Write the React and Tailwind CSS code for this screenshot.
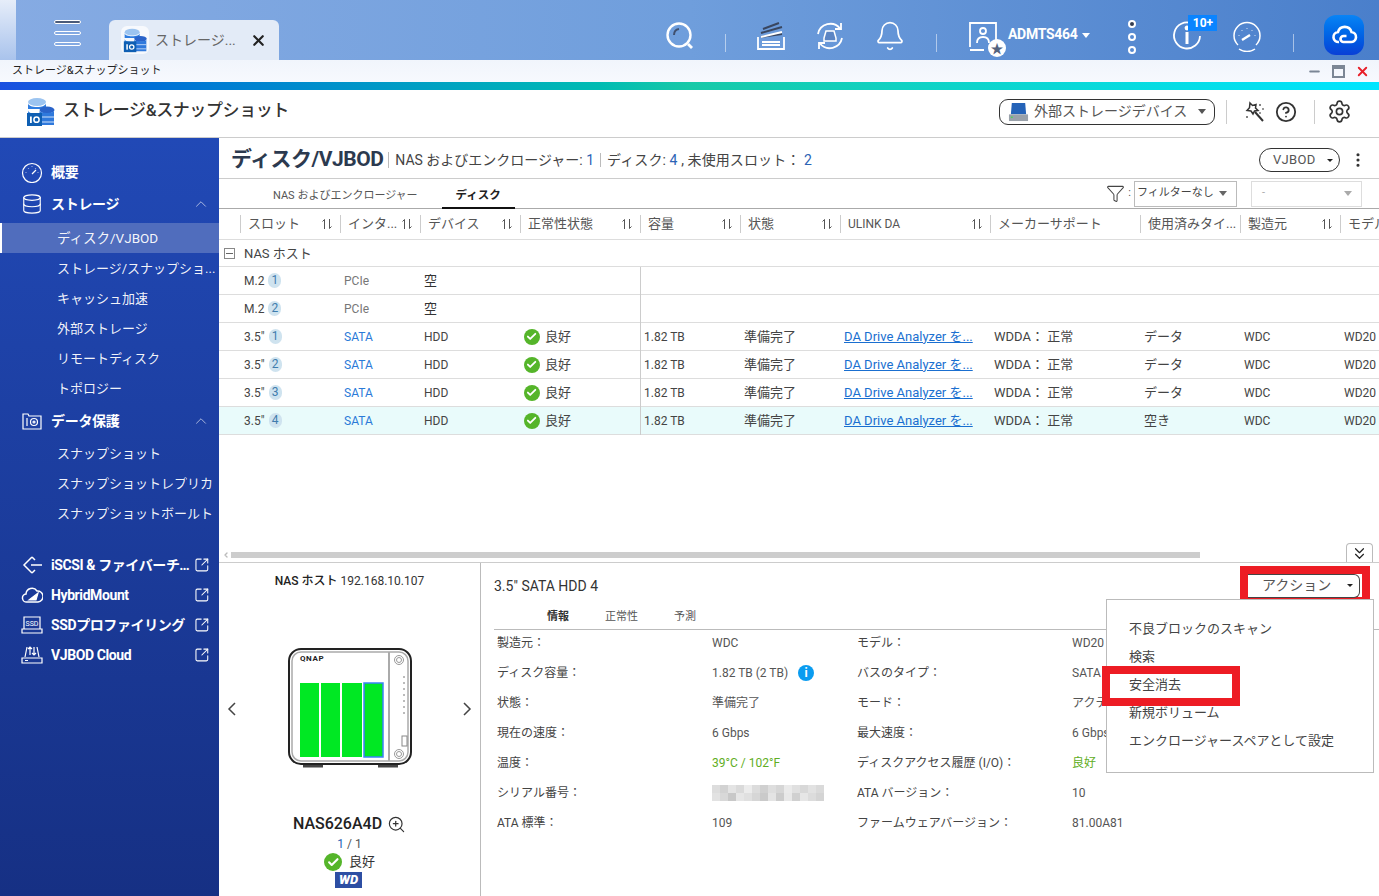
import React from "react";
import {
  Bell,
  Check,
  ChevronUp,
  ChevronLeft,
  ChevronsDown,
  CircleHelp,
  Database,
  EllipsisVertical,
  Funnel,
  Minus,
  Settings,
  SquareArrowOutUpRight,
  X,
  ZoomIn,
} from "lucide-react";

const Caret = ({ className = "border-t-[#333]" }) => (
  <span className={`inline-block w-0 h-0 border-x-[4px] border-x-transparent border-t-[5px] ${className}`} />
);

const SmallCaret = ({ className = "" }) => (
  <span className={`inline-block w-0 h-0 border-x-[3px] border-x-transparent border-t-[3px] border-t-[#222] ${className}`} />
);

const AppLogo = ({ className }) => (
  <svg viewBox="0 0 30 30" className={className}>
    <ellipse cx="11" cy="5" rx="9" ry="4" fill="#9cc4f0" />
    <path d="M2 6c0 2.500 4 4 9 4s9-1.500 9-4v6H2z" fill="#2f7de0" />
    <path d="M2 13c0 2.500 4 4 9 4s9-1.500 9-4v4H2z" fill="#3f8be8" />
    <ellipse cx="21" cy="13" rx="7.500" ry="3.500" fill="#2a63c9" />
    <path d="M13.500 14v14h14.500V14c-1 2.500-13 2.500-14.500 0z" fill="#2f79dc" />
    <path d="M14 20h14M14 25h14" stroke="#cfe2fa" strokeWidth="1" />
    <rect x="1" y="16" width="15" height="13" fill="#0f5fb3" />
    <rect x="4" y="19.500" width="1.800" height="6.500" fill="#fff" />
    <circle cx="10.500" cy="22.700" r="2.600" fill="none" stroke="#fff" strokeWidth="1.500" />
  </svg>
);

const TopIcon = ({ children }) => (
  <svg viewBox="0 0 32 32" fill="none" stroke="#fff" strokeWidth="1.800" className="w-8 h-8">
    {children}
  </svg>
);

const TopSep = ({ className }) => <div className={`w-px h-[18px] bg-white/50 ${className}`} />;

const TopBar = () => (
  <div className="h-[60px] flex items-start bg-gradient-to-r from-[#86abe3] via-[#6f9edc] to-[#4a7fcb]">
    <div className="w-4 h-[60px] bg-gradient-to-b from-[#e6edf9] to-[#a9c3ec]" />
    <div className="ml-[38px] mt-[20px] w-[27px] flex flex-col gap-[7px]">
      <div className="h-[4px] rounded-full border border-white bg-[#4a5a78]" />
      <div className="h-[4px] rounded-full border border-white" />
      <div className="h-[4px] rounded-full border border-white" />
    </div>
    <div className="ml-[28px] mt-[20px] w-[170px] h-[40px] rounded-t-md bg-[#e3ebf7] flex items-center pl-3">
      <div className="w-[28px] h-[28px] rounded-md bg-white/70 flex items-center justify-center shrink-0">
        <AppLogo className="w-[25px] h-[25px]" />
      </div>
      <span className="ml-[6px] w-[95px] shrink-0 whitespace-nowrap text-[14px] text-[#666]">ストレージ...</span>
      <X className="w-[17px] h-[17px] text-[#222] shrink-0" strokeWidth={3} />
    </div>

    <div className="ml-[385px] mt-[20px]">
      <TopIcon>
        <circle cx="15" cy="15" r="11.500" strokeWidth="2.400" />
        <path d="M24 24l4 4" strokeWidth="2.800" />
        <path d="M10 15c0-3.500 2-5.500 5-6" stroke="#40506e" strokeWidth="2" />
      </TopIcon>
    </div>
    <TopSep className="ml-[29px] mt-[34px]" />
    <div className="ml-[29px] mt-[20px]">
      <TopIcon>
        <path d="M3 17v12h26V17" />
        <path d="M6 17l21-3M6 13l21-6M8 9l16-6" strokeWidth="2" stroke="#39465f" />
        <path d="M6 17l21-5M7 22h18M7 25h18" />
      </TopIcon>
    </div>
    <div className="ml-[27px] mt-[20px]">
      <TopIcon>
        <path d="M4 14A12.500 12.500 0 0 1 26 8.500" />
        <path d="M28 18A12.500 12.500 0 0 1 6 23.500" />
        <path d="M27 3v6h-6M5 29v-6h6" />
        <path d="M10 18l2-7h8l2 7v3H10z" fill="#5b85c4" strokeWidth="1.500" />
      </TopIcon>
    </div>
    <div className="ml-[28px] mt-[20px]">
      <Bell className="w-8 h-8 text-white" strokeWidth={1.300} />
    </div>
    <TopSep className="ml-[30px] mt-[34px]" />
    <div className="relative ml-[30px] mt-[20px]">
      <TopIcon>
        <path d="M3 27V3h26v21" />
        <circle cx="16" cy="11" r="3" />
        <path d="M10 23c0-4 2-6 6-6s6 2 6 6M3 30h14" />
      </TopIcon>
      <div className="absolute left-[21px] top-[19px] w-[18px] h-[18px] rounded-full bg-white flex items-center justify-center text-[13px] leading-none text-[#55637e]">★</div>
    </div>
    <span className="ml-[9px] mt-[24px] text-[14px] font-bold tracking-[-0.3px] text-white">ADMTS464</span>
    <Caret className="ml-[5px] mt-[33px] border-t-white" />
    <div className="ml-[38px] mt-[20px] flex flex-col gap-[5px]">
      <div className="w-[8px] h-[8px] rounded-full border-2 border-white bg-[#333c50]" />
      <div className="w-[8px] h-[8px] rounded-full border-2 border-white" />
      <div className="w-[8px] h-[8px] rounded-full border-2 border-white" />
    </div>
    <div className="relative ml-[35px] mt-[20px]">
      <TopIcon>
        <path d="M21 3.500A13 13 0 1 0 29 16" />
        <path d="M16 12v12" strokeWidth="3" />
        <circle cx="16" cy="8" r="1.500" fill="#fff" />
      </TopIcon>
      <div className="absolute left-[17px] top-[-5px] w-[29px] h-[16px] bg-[#0a84ff] text-white text-[12px] font-bold leading-[16px] text-center">10+</div>
    </div>
    <div className="ml-[28px] mt-[20px]">
      <TopIcon>
        <path d="M7 25A13 13 0 1 1 25 25" strokeWidth="1.500" />
        <path d="M8 29a14 14 0 0 0 16 0" strokeWidth="1.500" />
        <path d="M11 20l8-5" strokeWidth="2.400" />
        <path d="M8 15v.5M11 10v.5M16 8v.5M21 10v.5M24 15v.5" strokeWidth="1.500" />
      </TopIcon>
    </div>
    <TopSep className="ml-[30px] mt-[34px]" />
    <div className="ml-[30px] mt-[15px] w-[40px] h-[40px] rounded-[12px] bg-gradient-to-b from-[#0a84f5] to-[#0a3fd6] flex items-center justify-center">
      <svg viewBox="0 0 28 28" fill="none" stroke="#fff" strokeWidth="2.600" className="w-[28px] h-[28px]">
        <path d="M9 21a5 5 0 0 1-1-10 7 7 0 0 1 13.500 0 5 5 0 0 1-1 10h-7a3 3 0 0 1 0-6h3" />
      </svg>
    </div>
  </div>
);

const TitleBar = () => (
  <div className="h-[22px] bg-gradient-to-b from-[#f1f5fc] to-[#f7f9fe] flex items-center justify-between pl-3 pr-[9px]">
    <span className="text-[11px] text-[#222]">ストレージ&スナップショット</span>
    <div className="flex items-center gap-[10px]">
      <Minus className="w-[15px] h-[15px] text-[#7b8695]" strokeWidth={3} />
      <div className="w-[13px] h-[13px] border-2 border-t-[4px] border-[#7b8695]" />
      <X className="w-[15px] h-[15px] text-[#e8202a]" strokeWidth={3} />
    </div>
  </div>
);

const AppHeader = () => (
  <div className="h-[48px] bg-white border-b border-[#ccc] flex items-center pb-[4px]">
    <AppLogo className="ml-[26px] w-[30px] h-[30px]" />
    <span className="ml-[7px] mb-[2px] text-[17px] font-medium tracking-[-0.4px] text-[#333]">ストレージ&スナップショット</span>
    <div className="ml-auto mr-[27px] flex items-center">
      <div className="w-[216px] h-[26px] rounded-[9px] border border-[#333] flex items-center pl-2 pr-2">
        <svg viewBox="0 0 22 22" className="w-[21px] h-[21px]">
          <path d="M3 14l1-12h14l1 12z" fill="#2563b8" />
          <path d="M1 14h20v7H1z" fill="#9aa1aa" />
          <path d="M3 17h2" stroke="#4fd15a" strokeWidth="1.500" />
        </svg>
        <span className="ml-[5px] text-[14px] text-[#555]">外部ストレージデバイス</span>
        <Caret className="ml-auto border-t-[#555]" />
      </div>
      <div className="ml-[11px] w-px h-[24px] bg-[#ccc]" />
      <svg viewBox="0 0 22 22" fill="none" stroke="#333" strokeWidth="1.500" className="ml-[16px] w-[22px] h-[22px]">
        <path d="M7 2l2.500 2.500L13 3.500l-.5 3.500 2.500 2.500-3.500.5-1.500 3-2-3-4-.5 2.500-2.800z" />
        <path d="M12 11l8 9" strokeWidth="2" />
        <path d="M17 3v2M19 8h2M16 12h2M4 15v2" strokeWidth="1.200" />
      </svg>
      <CircleHelp className="ml-[10px] w-[22px] h-[22px] text-[#333]" strokeWidth={2} />
      <div className="ml-[17px] w-px h-[24px] bg-[#ccc]" />
      <Settings className="ml-[12px] w-[25px] h-[25px] text-[#333]" strokeWidth={1.600} />
    </div>
  </div>
);

const SideIcon = ({ children }) => (
  <svg viewBox="0 0 22 22" fill="none" stroke="#fff" strokeWidth="1.200" className="w-[22px] h-[22px] shrink-0">
    {children}
  </svg>
);

const SideHead = ({ icon, label, open, className = "" }) => (
  <div className={`h-[30px] flex items-center pl-[21px] pr-[9px] ${className}`}>
    {icon}
    <span className="ml-[8px] text-[14px] font-bold text-white tracking-[-0.3px]">{label}</span>
    {open && <ChevronUp className="ml-auto w-[18px] h-[18px] text-white/80" strokeWidth={1} />}
  </div>
);

const SideItem = ({ label, active }) => (
  <div
    className={`h-[30px] flex items-center whitespace-nowrap text-white/95 ${
      active ? "bg-[#506dbd] border-l-2 border-white pl-[55px] text-[13.5px]" : "pl-[57px] pt-[1px] text-[13px]"
    }`}
  >
    {label}
  </div>
);

const SideLink = ({ icon, label }) => (
  <div className="h-[30px] flex items-center pl-[21px] pr-[9px]">
    {icon}
    <span className="ml-[8px] w-[146px] truncate text-[14px] font-bold text-white tracking-[-0.4px]">{label}</span>
    <SquareArrowOutUpRight className="ml-auto w-[16px] h-[16px] text-white" strokeWidth={1.600} />
  </div>
);

const Sidebar = () => (
  <div className="w-[219px] shrink-0 bg-gradient-to-b from-[#2149b6] to-[#163084] pt-[19px]">
    <SideHead
      label="概要"
      icon={
        <SideIcon>
          <circle cx="11" cy="12" r="9.500" />
          <path d="M11 13l4-4M5 11v.5M7.500 7v.5M11 5.500V6M14.500 7v.5M17 11v.5" />
        </SideIcon>
      }
    />
    <SideHead
      className="mt-[2px]"
      label="ストレージ"
      open
      icon={<Database className="w-[22px] h-[22px] text-white shrink-0" strokeWidth={1.200} />}
    />
    <div className="mt-[4px]">
      <SideItem label="ディスク/VJBOD" active />
      <SideItem label="ストレージ/スナップショ..." />
      <SideItem label="キャッシュ加速" />
      <SideItem label="外部ストレージ" />
      <SideItem label="リモートディスク" />
      <SideItem label="トポロジー" />
    </div>
    <SideHead
      className="mt-[3px]"
      label="データ保護"
      open
      icon={
        <SideIcon>
          <path d="M2 19V4h5l1 2h12v13z" />
          <circle cx="13" cy="12" r="3.500" />
          <circle cx="13" cy="12" r="1" />
          <path d="M6 8v8" />
        </SideIcon>
      }
    />
    <div className="mt-[2px]">
      <SideItem label="スナップショット" />
      <SideItem label="スナップショットレプリカ" />
      <SideItem label="スナップショットボールト" />
    </div>
    <div className="mt-[22px]">
      <SideLink
        label="iSCSI & ファイバーチャネル"
        icon={
          <SideIcon>
            <path d="M11 3l-8 8 8 8M11 3l3 3M11 19l3-3M10 11h11" strokeWidth="1.500" />
          </SideIcon>
        }
      />
      <SideLink
        label="HybridMount"
        icon={
          <SideIcon>
            <path d="M6 18a4 4 0 0 1-1-8 6 6 0 0 1 11-3 5 5 0 0 1 1 11z" strokeWidth="1.500" />
            <path d="M8 16l9-7-2 7z" fill="#fff" />
          </SideIcon>
        }
      />
      <SideLink
        label="SSDプロファイリング"
        icon={
          <SideIcon>
            <path d="M3 15V3h16v12M1 15h20v4H1z" />
            <text x="11" y="12" fontSize="7" fontFamily="Roboto" fill="#fff" stroke="none" textAnchor="middle">SSD</text>
          </SideIcon>
        }
      />
      <SideLink
        label="VJBOD Cloud"
        icon={
          <SideIcon>
            <path d="M4 13l2-10M18 13L16 3M1 14h20v5H1zM9 3v8M7 5l2-2 2 2M13 3v8M11 9l2 2 2-2M4 16.500h3" />
          </SideIcon>
        }
      />
    </div>
  </div>
);

const SortIcon = () => (
  <svg viewBox="0 0 12 12" fill="none" stroke="#555" strokeWidth="1" className="w-[12px] h-[12px] shrink-0">
    <path d="M3.500 11V1.500L1.500 3.500M8.500 1v9.500l2-2" />
  </svg>
);

const columns = [
  { label: "スロット", w: "w-[100px]", sort: true, first: true },
  { label: "インタ...", w: "w-[80px]", sort: true },
  { label: "デバイス", w: "w-[100px]", sort: true },
  { label: "正常性状態", w: "w-[120px]", sort: true },
  { label: "容量", w: "w-[100px]", sort: true },
  { label: "状態", w: "w-[100px]", sort: true },
  { label: "ULINK DA", w: "w-[150px]", sort: true, small: true },
  { label: "メーカーサポート", w: "w-[150px]" },
  { label: "使用済みタイ...", w: "w-[100px]" },
  { label: "製造元", w: "w-[100px]", sort: true },
  { label: "モデル", w: "w-[100px]" },
];

const disks = [
  { n: 1, use: "データ" },
  { n: 2, use: "データ" },
  { n: 3, use: "データ" },
  { n: 4, use: "空き", selected: true },
];

const OkIcon = ({ className }) => (
  <span className={`rounded-full bg-[#55b52a] flex items-center justify-center shrink-0 ${className}`}>
    <Check className="w-[70%] h-[70%] text-white" strokeWidth={4} />
  </span>
);

const SlotBadge = ({ n }) => (
  <span className="ml-[4px] w-[13px] h-[15px] rounded-full bg-[#cfe3ef] text-[#3f7cad] text-[12px] leading-[15px] text-center">{n}</span>
);

const EmptyRow = ({ n }) => (
  <div className="h-[28px] flex items-center border-b border-[#ddd] pl-[25px] text-[12px]">
    <div className="w-[100px] shrink-0 flex items-center text-[#444]">
      M.2
      <SlotBadge n={n} />
    </div>
    <div className="w-[80px] shrink-0 text-[#777]">PCIe</div>
    <div className="w-[216px] shrink-0 text-[13px] text-[#333]">空</div>
    <div className="w-px h-[28px] bg-[#ccc]" />
  </div>
);

const DiskRow = ({ n, use, selected }) => (
  <div className={`h-[28px] flex items-center border-b border-[#ddd] pl-[25px] text-[12px] whitespace-nowrap text-[#444] ${selected ? "bg-[#e9fbfb]" : ""}`}>
    <div className="w-[100px] shrink-0 flex items-center">
      3.5"
      <SlotBadge n={n} />
    </div>
    <div className="w-[80px] shrink-0 text-[#2a7ad8]">SATA</div>
    <div className="w-[100px] shrink-0">HDD</div>
    <div className="w-[116px] shrink-0 flex items-center text-[13px]">
      <OkIcon className="w-[16px] h-[16px]" />
      <span className="ml-[5px]">良好</span>
    </div>
    <div className="w-px h-[28px] shrink-0 bg-[#ccc]" />
    <div className="w-[103px] shrink-0 pl-[3px]">1.82 TB</div>
    <div className="w-[100px] shrink-0 text-[13px]">準備完了</div>
    <div className="w-[150px] shrink-0 text-[13px] text-[#1a6fd0]">
      <span className="underline">DA Drive Analyzer を...</span>
    </div>
    <div className="w-[150px] shrink-0 text-[13px]">WDDA： 正常</div>
    <div className="w-[100px] shrink-0 text-[13px]">{use}</div>
    <div className="w-[100px] shrink-0">WDC</div>
    <div className="w-[100px] shrink-0">WD20</div>
  </div>
);

const DiskTable = () => (
  <div className="relative flex-1 overflow-hidden">
    <div className="h-[31px] flex items-center pl-[21px] border-b border-[#ddd] whitespace-nowrap">
      {columns.map((col) => (
        <div key={col.label} className={`${col.w} shrink-0 h-[18px] border-l border-[#ccc] pl-[7px] pr-[7px] flex items-center justify-between ${col.small ? "text-[12px]" : "text-[13px]"} text-[#555]`}>
          <span>{col.label}</span>
          {col.sort && <SortIcon />}
        </div>
      ))}
    </div>
    <div className="h-[27px] flex items-center pl-[5px] pt-[1px] border-b border-[#ddd]">
      <span className="w-[11px] h-[11px] border border-[#888] flex items-center justify-center">
        <span className="w-[7px] h-px bg-[#666]" />
      </span>
      <span className="ml-[9px] text-[13px] text-[#444]">NAS ホスト</span>
    </div>
    <EmptyRow n={1} />
    <EmptyRow n={2} />
    {disks.map((d) => (
      <DiskRow key={d.n} {...d} />
    ))}
    <div className="absolute left-0 right-0 bottom-[4px] h-[6px] flex items-center pl-[3px] pr-[179px]">
      <ChevronLeft className="w-[8px] h-[8px] text-[#bbb]" strokeWidth={4} />
      <div className="ml-px flex-1 h-[6px] bg-[#cdcdcd]" />
    </div>
    <div className="absolute right-[6px] bottom-[-1px] w-[27px] h-[20px] bg-white border border-b-0 border-[#bbb] rounded-t flex items-center justify-center">
      <ChevronsDown className="w-[19px] h-[19px] text-[#222]" strokeWidth={1.500} />
    </div>
  </div>
);

const NasDevice = () => (
  <svg viewBox="0 0 124 122" className="w-[124px] h-[122px]">
    <path d="M15 118h20M90 118h20" stroke="#444" strokeWidth="3" />
    <rect x="1" y="1" width="122" height="115" rx="12" fill="#fff" stroke="#222" strokeWidth="2" />
    <rect x="4" y="4" width="116" height="109" rx="9" fill="none" stroke="#aaa" strokeWidth="1.500" />
    <path d="M101 4v109" stroke="#aaa" strokeWidth="2" />
    <text x="12" y="13" fontSize="8" fontWeight="700" fontFamily="Roboto" letterSpacing="0.600" fill="#222">QNAP</text>
    <rect x="12" y="35" width="19" height="74" fill="#00e823" />
    <rect x="33" y="35" width="19" height="74" fill="#00e823" />
    <rect x="54" y="35" width="20" height="74" fill="#00e823" />
    <rect x="76" y="35" width="19" height="74" fill="#00e823" stroke="#3b82f6" strokeWidth="1.500" />
    <circle cx="111" cy="12" r="4.500" fill="none" stroke="#999" />
    <circle cx="111" cy="12" r="2.500" fill="none" stroke="#999" />
    <path d="M116 28v40" stroke="#bbb" strokeWidth="2" strokeDasharray="2 4" />
    <rect x="114" y="88" width="5" height="10" fill="none" stroke="#888" />
    <circle cx="111" cy="106" r="4.500" fill="none" stroke="#999" />
    <circle cx="111" cy="106" r="2.500" fill="none" stroke="#999" />
  </svg>
);

const NavArrow = ({ d }) => (
  <svg viewBox="0 0 12 18" fill="none" stroke="#444" strokeWidth="1.500" className="w-[12px] h-[18px]">
    <path d={d} />
  </svg>
);

const NasPanel = () => (
  <div className="w-[262px] shrink-0 border-r border-[#bbb] flex flex-col items-center pt-[9px]">
    <div className="text-[12px] text-[#333] whitespace-nowrap">
      <span className="font-medium text-[#222]">NAS ホスト</span> 192.168.10.107
    </div>
    <div className="mt-[58px] w-full flex items-center justify-between px-[7px]">
      <NavArrow d="M9 3L3 9l6 6" />
      <NasDevice />
      <NavArrow d="M3 3l6 6-6 6" />
    </div>
    <div className="mt-[42px] flex items-center">
      <span className="text-[16px] font-medium text-[#222]">NAS626A4D</span>
      <ZoomIn className="ml-[5px] w-[19px] h-[19px] text-[#333]" strokeWidth={1.500} />
    </div>
    <div className="mt-[1px] h-[15px] text-[12px] leading-[15px] text-[#555]">
      <span className="text-[#2b63b5]">1</span> / 1
    </div>
    <div className="mt-[1px] h-[18px] flex items-center text-[13px] text-[#333]">
      <OkIcon className="w-[18px] h-[18px]" />
      <span className="ml-[7px]">良好</span>
    </div>
    <div className="mt-[1px] mr-[2px] w-[27px] h-[16px] bg-[#2d4ea3] text-white text-[13px] font-black italic leading-[16px] text-center">WD</div>
  </div>
);

const blurCells = [
  "bg-[#ddd]", "bg-[#d2d2d2]", "bg-[#e4e4e4]", "bg-[#dadada]", "bg-[#ececec]", "bg-[#dcdcdc]", "bg-[#d0d0d0]",
  "bg-[#dedede]", "bg-[#d6d6d6]", "bg-[#eaeaea]", "bg-[#e0e0e0]", "bg-[#d8d8d8]", "bg-[#e2e2e2]", "bg-[#dadada]",
  "bg-[#e2e2e2]", "bg-[#d8d8d8]", "bg-[#c8c8c8]", "bg-[#e6e6e6]", "bg-[#e0e0e0]", "bg-[#d6d6d6]", "bg-[#cacaca]",
  "bg-[#e4e4e4]", "bg-[#cccccc]", "bg-[#e8e8e8]", "bg-[#d0d0d0]", "bg-[#e6e6e6]", "bg-[#dcdcdc]", "bg-[#d4d4d4]",
];

const infoRows = [
  ["製造元：", "WDC", "モデル：", "WD20"],
  ["ディスク容量：", "cap", "バスのタイプ：", "SATA"],
  ["状態：", "準備完了", "モード：", "アクテ"],
  ["現在の速度：", "6 Gbps", "最大速度：", "6 Gbps"],
  ["温度：", "temp", "ディスクアクセス履歴 (I/O)：", "良好"],
  ["シリアル番号：", "serial", "ATA バージョン：", "10"],
  ["ATA 標準：", "109", "ファームウェアバージョン：", "81.00A81"],
];

const InfoValue = ({ v }) => {
  if (v === "cap") {
    return (
      <div className="flex items-center">
        1.82 TB (2 TB)
        <span className="ml-[10px] w-[16px] h-[16px] rounded-full bg-[#0a9cf0] text-white text-[12px] font-bold leading-[16px] text-center">i</span>
      </div>
    );
  }
  if (v === "temp") return <span className="text-[#5fae24]">39°C / 102°F</span>;
  if (v === "serial") {
    return (
      <div className="w-[112px] grid grid-cols-[repeat(14,8px)] grid-rows-[8px_8px]">
        {blurCells.map((c, i) => (
          <div key={i} className={c} />
        ))}
      </div>
    );
  }
  return v;
};

const DetailPanel = () => (
  <div className="relative flex-1 pl-[13px] pt-[13px] min-w-0">
    <div className="h-[20px] text-[14px] leading-[20px] text-[#333]">3.5" SATA HDD 4</div>
    <div className="mt-[13px] h-[21px] border-b border-[#bbb] flex items-start text-[11px] leading-[16px] text-[#555]">
      <span className="ml-[53px] font-bold text-[#333]">情報</span>
      <span className="ml-[36px]">正常性</span>
      <span className="ml-[36px]">予測</span>
    </div>
    <div className="-mt-[2px] ml-[3px] text-[12px] text-[#555]">
      {infoRows.map(([a, b, c, d]) => (
        <div key={a} className="h-[30px] flex items-center whitespace-nowrap">
          <div className="w-[215px] text-[#444]">{a}</div>
          <div className="w-[145px]"><InfoValue v={b} /></div>
          <div className="w-[215px] text-[#444]">{c}</div>
          <div className={d === "良好" ? "text-[#5fae24]" : ""}>{d}</div>
        </div>
      ))}
    </div>

    {/* action button with the red highlight from the screenshot */}
    <div className="absolute right-[9px] top-[3px] w-[130px] h-[39px] border-[8px] border-[#ed1c24] bg-white flex items-center">
      <div className="w-[112px] h-[24px] rounded-r-md border-r border-y border-[#444] flex items-center pl-[14px] pr-[6px] text-[14px] text-[#555]">
        アクション
        <SmallCaret className="ml-auto" />
      </div>
    </div>

    {/* dropdown menu */}
    <div className="absolute right-[5px] top-[36px] w-[268px] h-[174px] bg-white border border-[#bbb] pt-[15px] pl-[22px] text-[13px] text-[#444]">
      {["不良ブロックのスキャン", "検索", "安全消去", "新規ボリューム", "エンクロージャースペアとして設定"].map((item) => (
        <div key={item} className="h-[28px] leading-[28px]">{item}</div>
      ))}
    </div>
    <div className="absolute right-[139px] top-[103px] w-[138px] h-[40px] border-[8px] border-[#ed1c24]" />
  </div>
);

export default function App() {
  return (
    <div className="w-[1379px] h-[896px] overflow-hidden bg-white [font-family:Roboto,'Noto_Sans_CJK_JP',sans-serif]">
      <TopBar />
      <TitleBar />
      <div className="h-[8px] bg-gradient-to-r from-[#1a4fe0] via-[#17c9a8] to-[#00e5ff]" />
      <AppHeader />
      <div className="h-[758px] flex">
        <Sidebar />
        <div className="flex-1 min-w-0 flex flex-col">
          <div className="h-[41px] border-b border-[#ccc] flex items-center pt-[4px] pl-[12px] pr-[12px] whitespace-nowrap">
            <span className="text-[21px] font-bold text-[#2c3a4f] tracking-[-0.5px]">ディスク/VJBOD</span>
            <span className="ml-[5px] w-px h-[16px] bg-[#bbb]" />
            <span className="ml-[6px] text-[14px] text-[#444]">
              NAS およびエンクロージャー: <span className="text-[#2b63b5]">1</span>
            </span>
            <span className="ml-[6px] w-px h-[14px] bg-[#bbb]" />
            <span className="ml-[6px] text-[14px] tracking-[0.1px] text-[#444]">
              ディスク: <span className="text-[#2b63b5]">4</span> , 未使用スロット： <span className="text-[#2b63b5]">2</span>
            </span>
            <div className="ml-auto w-[81px] h-[24px] rounded-full border border-[#333] flex items-center pl-[13px] pr-[6px] text-[13px] tracking-[0.3px] text-[#555]">
              VJBOD
              <SmallCaret className="ml-auto" />
            </div>
            <EllipsisVertical className="ml-[9px] w-[18px] h-[18px] text-[#333]" strokeWidth={2.200} />
          </div>
          <div className="h-[30px] border-b border-[#aaa] flex items-center pr-[17px]">
            <div className="ml-[54px] pt-[5px] text-[11px] text-[#555] whitespace-nowrap">NAS およびエンクロージャー</div>
            <div className="ml-[24px] w-[73px] h-[30px] border-b-2 border-[#111] flex items-center justify-center pt-[6px] text-[11.5px] font-bold text-[#222]">ディスク</div>
            <Funnel className="ml-auto w-[19px] h-[19px] text-[#444]" strokeWidth={1.300} />
            <span className="ml-[3px] text-[11px] text-[#555]">:</span>
            <div className="ml-[3px] w-[103px] h-[26px] border border-[#bbb] flex items-center pl-[2px] pr-[9px] text-[11px] whitespace-nowrap text-[#444]">
              フィルターなし
              <Caret className="ml-auto border-t-[#666]" />
            </div>
            <div className="ml-[14px] w-[111px] h-[26px] border border-[#ddd] flex items-center pl-[10px] pr-[9px] text-[11px] text-[#aaa]">
              -
              <Caret className="ml-auto border-t-[#aaa]" />
            </div>
          </div>
          <DiskTable />
          <div className="h-[334px] border-t border-[#ccc] flex">
            <NasPanel />
            <DetailPanel />
          </div>
        </div>
      </div>
    </div>
  );
}
